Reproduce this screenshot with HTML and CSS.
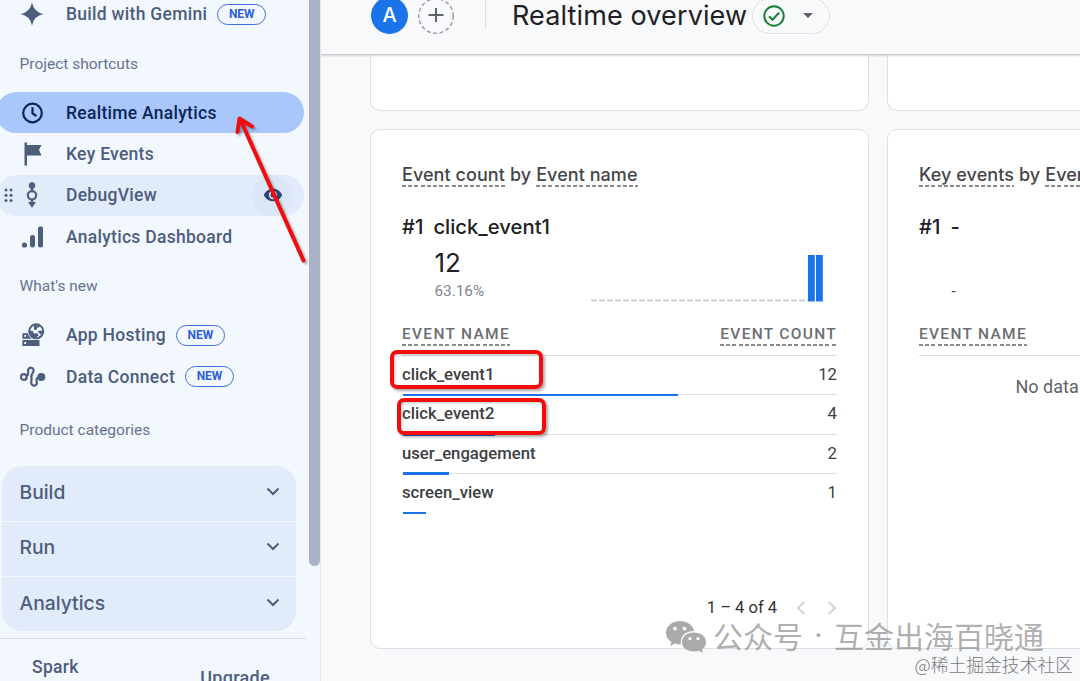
FILE: index.html
```
<!DOCTYPE html>
<html lang="en">
<head>
    <meta charset="UTF-8">
    <meta name="viewport" content="width=device-width, initial-scale=1.0">
    <title>Realtime overview</title>
    <link rel="stylesheet" href="styles.css">
</head>
<body>
    <aside class="sidebar">
        <nav class="nav">
            <a class="nav-item gemini">
                <svg class="icon" viewBox="0 0 24 24"><path d="M12 0.500Q13.800 10.200 23.500 12Q13.800 13.800 12 23.500Q10.200 13.800 0.500 12Q10.200 10.200 12 0.500Z"/></svg>
                <span>Build with Gemini</span>
                <span class="badge">NEW</span>
            </a>
            <div class="nav-title shortcuts">Project shortcuts</div>
            <a class="nav-item active">
                <svg class="icon" viewBox="0 0 24 24"><circle class="line" cx="12.500" cy="12" r="9.300"/><path class="line" d="M12.500 6.300V12.400L16.500 15"/></svg>
                <span>Realtime Analytics</span>
            </a>
            <a class="nav-item">
                <svg class="icon" viewBox="0 0 24 24"><path d="M4.500 0.500H7V3H21.500L19 8L21.500 13.500H7V23.500H4.500Z"/></svg>
                <span>Key Events</span>
            </a>
            <a class="nav-item hovered">
                <svg class="drag" viewBox="0 0 9 15"><circle cx="2" cy="2" r="1.500"/><circle cx="7" cy="2" r="1.500"/><circle cx="2" cy="7.300" r="1.500"/><circle cx="7" cy="7.300" r="1.500"/><circle cx="2" cy="12.600" r="1.500"/><circle cx="7" cy="12.600" r="1.500"/></svg>
                <svg class="icon tall" viewBox="0 0 24 26"><circle cx="12" cy="3.500" r="3.200"/><path d="M10.800 4H13.200V9H10.800ZM10.800 17H13.200V20H16L12 25.800L8 20H10.800Z"/><circle class="line" cx="12" cy="13.300" r="4.200"/></svg>
                <span>DebugView</span>
                <span class="eye"><svg viewBox="0 0 24 24"><path d="M12 4.500C7 4.500 2.700 7.600 1 12c1.700 4.400 6 7.500 11 7.500s9.300-3.100 11-7.500C21.300 7.600 17 4.500 12 4.500zM12 17a5 5 0 1 1 0-10 5 5 0 0 1 0 10zm0-8a3 3 0 1 0 0 6 3 3 0 0 0 0-6z"/></svg></span>
            </a>
            <a class="nav-item">
                <svg class="icon" viewBox="0 0 24 24"><circle cx="4.500" cy="20" r="2.600"/><rect x="10" y="10" width="5" height="12.500" rx="2.500"/><rect x="18" y="1.500" width="5" height="21" rx="2"/></svg>
                <span>Analytics Dashboard</span>
            </a>
            <div class="nav-title whats-new">What's new</div>
            <a class="nav-item">
                <svg class="icon wide" viewBox="0 0 26 26"><path fill-rule="evenodd" d="M1.500 18.500H20V25H1.500ZM3.500 20.700V22.700H5.500V20.700Z"/><path fill-rule="evenodd" d="M1.500 11H7.500Q8 15 11.500 17H1.500ZM3.500 13V15H5.500V13Z"/><circle class="line" cx="16.500" cy="9" r="7.600"/><path d="M9 8L13 9L14 11.500L18 11L19 13.500L15 16.500Q10 15 9 8ZM14 2.500L20 2.500L20 4.500L17.500 5L17 7.500L14 7ZM20 8L24 9L21 13L20 11L18 9.500Z"/></svg>
                <span>App Hosting</span>
                <span class="badge">NEW</span>
            </a>
            <a class="nav-item">
                <svg class="icon wide" viewBox="0 0 26 24"><circle class="line" cx="3.800" cy="12" r="2.900"/><path class="line" d="M6.400 10.800C10.500 9 6.500 6.500 8.500 4C10.500 1.500 14 3 13.500 6C13 8.500 10.500 9.500 11.500 13C12 15 10.500 17 11.500 19C13 22 17.500 20.500 16.800 17C16.500 15 15.500 13.500 18.500 12.500"/><circle cx="21.300" cy="12" r="4"/></svg>
                <span>Data Connect</span>
                <span class="badge">NEW</span>
            </a>
            <div class="nav-title products">Product categories</div>
        </nav>

        <div class="categories">
            <div class="category"><span>Build</span><svg class="chevron" viewBox="0 0 14 9"><path d="M1.500 1.500L7 7L12.500 1.500"/></svg></div>
            <div class="category"><span>Run</span><svg class="chevron" viewBox="0 0 14 9"><path d="M1.500 1.500L7 7L12.500 1.500"/></svg></div>
            <div class="category"><span>Analytics</span><svg class="chevron" viewBox="0 0 14 9"><path d="M1.500 1.500L7 7L12.500 1.500"/></svg></div>
        </div>

        <div class="plan">
            <span>Spark</span>
            <span class="upgrade">Upgrade</span>
        </div>
        <div class="scrollbar"></div>
    </aside>

    <main class="main">
        <header class="header">
            <span class="avatar">A</span>
            <svg class="add" viewBox="0 0 38 38"><circle cx="19" cy="19" r="17.300"/><path d="M19 11V25M11.500 18H26.500"/></svg>
            <span class="divider"></span>
            <h1>Realtime overview</h1>
            <div class="status">
                <svg class="check" viewBox="0 0 22 22"><circle cx="11" cy="11" r="9.700"/><path d="M6 11.300L9.500 14.800L16 7.800"/></svg>
                <svg class="caret" viewBox="0 0 10 5"><path d="M0 0H10L5 5Z"/></svg>
            </div>
        </header>

        <div class="cards">
            <section class="card top-card"></section>
            <section class="card top-card"></section>

            <section class="card">
                <h2><span class="dashed">Event count</span> by <span class="dashed">Event name</span></h2>
                <div class="rank"><span>#1</span><span>click_event1</span></div>
                <div class="summary">
                    <div>
                        <div class="big">12</div>
                        <div class="percent">63.16%</div>
                    </div>
                    <svg class="chart" viewBox="0 0 232 48"><path d="M0 46.500H217"/><rect x="217" y="1" width="6.800" height="46.500"/><rect x="225" y="1" width="6.800" height="46.500"/></svg>
                </div>
                <div class="table-head"><span class="dashed">EVENT NAME</span><span class="dashed">EVENT COUNT</span></div>
                <div class="row"><b>click_event1</b><span>12</span><i class="bar" style="width: 275px"></i></div>
                <div class="row"><b>click_event2</b><span>4</span><i class="bar" style="width: 92px"></i></div>
                <div class="row"><b>user_engagement</b><span>2</span><i class="bar" style="width: 46px"></i></div>
                <div class="row last"><b>screen_view</b><span>1</span><i class="bar" style="width: 23px"></i></div>
                <div class="pager">
                    <span>1 – 4 of 4</span>
                    <svg viewBox="0 0 10 14"><path d="M8.500 1L2 7L8.500 13"/></svg>
                    <svg viewBox="0 0 10 14"><path d="M1.500 1L8 7L1.500 13"/></svg>
                </div>
            </section>

            <section class="card">
                <h2><span class="dashed">Key events</span> by <span class="dashed">Event name</span></h2>
                <div class="rank"><span>#1</span><span>-</span></div>
                <div class="summary">
                    <div>
                        <div class="big"></div>
                        <div class="percent empty">-</div>
                    </div>
                </div>
                <div class="table-head"><span class="dashed">EVENT NAME</span></div>
                <div class="no-data">No data available</div>
            </section>
        </div>
    </main>

    <!-- Annotations -->
    <div class="mark mark-one"></div>
    <div class="mark mark-two"></div>
    <svg class="arrow" viewBox="0 0 90 160"><path d="M78.500 145.500L16 6M12.500 17L14.500 3.500L27 11.500"/></svg>

    <div class="watermark">
        <svg viewBox="0 0 42 34"><path fill-rule="evenodd" d="M15 1C7 1 1 6 1 13C1 17 3 20 6.500 22L5 26L10 23.500Q13 24.500 16 24.500C14.500 17 20 11 29 11C28 5 22 1 15 1ZM10 6.700A1.900 1.900 0 1 0 10 10.500A1.900 1.900 0 1 0 10 6.700ZM19.500 6.700A1.900 1.900 0 1 0 19.500 10.500A1.900 1.900 0 1 0 19.500 6.700Z"/><path fill-rule="evenodd" d="M29 12.500C22 12.500 17 16.500 17 22C17 28 22 31.500 29 31.500Q31.500 31.500 34 30.800L38 33L37 29.500C39.700 27.700 41 25 41 22C41 16.500 36 12.500 29 12.500ZM25 17A1.600 1.600 0 1 0 25 20.200A1.600 1.600 0 1 0 25 17ZM33 17A1.600 1.600 0 1 0 33 20.200A1.600 1.600 0 1 0 33 17Z"/></svg>
        <span>公众号</span><span class="dot">·</span><span>互金出海百晓通</span>
    </div>
    <div class="credit">@稀土掘金技术社区</div>
</body>
</html>
```
FILE: styles.css
```
/* General Styles */
* {
    box-sizing: border-box;
}

body {
    margin: 0;
    width: 1080px;
    height: 681px;
    display: flex;
    position: relative;
    overflow: hidden;
    font-family: Roboto, Arial, sans-serif;
    background: #f8f9fb;
}

svg {
    display: block;
    flex: none;
}

/* Sidebar */
.sidebar {
    position: relative;
    flex: none;
    width: 321px;
    height: 681px;
    background: #f3f7fe;
    border-right: 1px solid #e3e6ec;
    color: #4c5d7d;
    overflow: hidden;
}

.nav-item {
    display: flex;
    align-items: center;
    width: 304px;
    height: 41.4px;
    padding-left: 20px;
    font-size: 17.5px;
    font-weight: 500;
    letter-spacing: 0.28px;
    white-space: nowrap;
}

.gemini {
    margin-top: -6.5px;
}

.icon {
    width: 24px;
    height: 24px;
    margin-right: 22px;
    fill: #4c5d7d;
}

.icon .line {
    fill: none;
    stroke: #4c5d7d;
    stroke-width: 2.2;
}

.icon.tall {
    height: 26px;
}

.icon.wide {
    width: 26px;
    margin-right: 20px;
}

.badge {
    width: 49px;
    height: 21px;
    margin-left: 10px;
    border: 1.5px solid #3f6fd8;
    border-radius: 11px;
    color: #2b5fd9;
    font-size: 12px;
    font-weight: 700;
    letter-spacing: 0;
    line-height: 19px;
    text-align: center;
}

.nav-title {
    height: 20px;
    padding-left: 19.5px;
    font-size: 15.5px;
    line-height: 20px;
    color: #66738f;
}

.shortcuts {
    margin: 19px 0 18px;
}

.whats-new {
    margin: 18.6px 0 18.4px;
}

.products {
    margin: 22.6px 0 26.5px;
}

.active {
    width: 308px;
    margin-left: -4px;
    padding-left: 24px;
    border-radius: 21px;
    background: #a9c7fb;
    color: #0b2559;
}

.active .icon .line {
    stroke: #0b2559;
}

.hovered {
    width: 308px;
    margin-left: -4px;
    padding-left: 8px;
    border-radius: 21px;
    background: #e2ebfa;
}

.drag {
    width: 9px;
    height: 15px;
    margin-right: 7px;
    fill: #4c5d7d;
}

.eye {
    display: flex;
    align-items: center;
    justify-content: center;
    width: 41px;
    height: 41px;
    margin-left: auto;
    margin-right: 11px;
    border-radius: 50%;
    background: #dde6f6;
}

.eye svg {
    width: 20px;
    height: 20px;
    fill: #2c4a78;
}

.categories {
    margin-left: 2px;
    width: 294px;
    height: 165px;
    border-radius: 20px;
    background: #e2ebfa;
    overflow: hidden;
}

.category {
    display: flex;
    align-items: center;
    justify-content: space-between;
    height: 55.4px;
    padding: 0 16px 4px 17.5px;
    border-bottom: 1.5px solid #f3f7fe;
    font-family: Inter, sans-serif;
    font-size: 19.3px;
    font-weight: 500;
}

.category:last-child {
    border-bottom: none;
}

.chevron {
    width: 14px;
    height: 9px;
    fill: none;
    stroke: #4c5d7d;
    stroke-width: 2;
}

.plan {
    display: flex;
    width: 306px;
    margin-top: 7px;
    padding: 18px 0 0 32px;
    border-top: 1px solid #d5dbe6;
    font-size: 17.5px;
    font-weight: 500;
    letter-spacing: 0.3px;
    line-height: 20px;
}

.upgrade {
    margin: 11px 0 0 auto;
    padding-right: 36px;
    font-size: 18px;
}

.scrollbar {
    position: absolute;
    top: 0;
    right: 0;
    width: 11px;
    height: 566px;
    border-radius: 0 0 6px 6px;
    background: #a8b3ca;
}

/* Main area */
.main {
    flex: 1;
    min-width: 0;
    overflow: hidden;
}

.header {
    display: flex;
    align-items: center;
    height: 55px;
    padding: 0 0 23px 50px;
    border-bottom: 1px solid #c9cbce;
    box-shadow: 0 1px 2px rgba(0, 0, 0, 0.15);
    position: relative;
}

.avatar {
    width: 37px;
    height: 37px;
    border-radius: 50%;
    background: #1a73e8;
    color: white;
    font-family: Inter, sans-serif;
    font-size: 20px;
    font-weight: 500;
    line-height: 37px;
    text-align: center;
}

.add {
    width: 38px;
    height: 38px;
    margin-left: 9px;
    fill: none;
    stroke: #5f6368;
    stroke-width: 2;
}

.add circle {
    stroke: #9aa0a6;
    stroke-width: 1.5;
    stroke-dasharray: 4 2.5;
}

.divider {
    width: 1px;
    height: 34px;
    margin: -8px 26px 0 30px;
    background: #dadce0;
}

h1 {
    margin: 0;
    width: 240px;
    font-family: Inter, sans-serif;
    font-size: 27px;
    font-weight: 400;
    letter-spacing: 0.12px;
    white-space: nowrap;
    color: #202124;
}

.status {
    display: flex;
    align-items: center;
    width: 78px;
    height: 36px;
    padding-left: 10px;
    border: 1.5px solid #dfe1e6;
    border-radius: 18px;
}

.check {
    width: 22px;
    height: 22px;
    fill: none;
    stroke: #188038;
    stroke-width: 2;
}

.caret {
    width: 10px;
    height: 5px;
    margin-left: 18px;
    fill: #5f6368;
}

.cards {
    display: grid;
    grid-template-columns: 499px 499px;
    grid-template-rows: 56px 520px;
    gap: 18px;
    padding-left: 49px;
}

.card {
    padding: 33px 31px 0 31px;
    background: white;
    border: 1.5px solid #dcdfe4;
    border-radius: 10px;
    white-space: nowrap;
}

.card.top-card {
    padding: 0;
    border-top: none;
    border-radius: 0 0 10px 10px;
}

.dashed {
    background: repeating-linear-gradient(to right, #8a8a8a 0 4px, transparent 4px 6.2px) left bottom / 100% 2px no-repeat;
}

h2 {
    display: flex;
    gap: 5px;
    margin: 0;
    height: 24px;
    font-family: Inter, sans-serif;
    font-size: 18px;
    font-weight: 500;
    letter-spacing: 0.06px;
    line-height: 24px;
    color: #444649;
}

.rank {
    display: flex;
    gap: 10px;
    margin-top: 28px;
    font-family: Inter, sans-serif;
    font-size: 20.3px;
    font-weight: 500;
    line-height: 24px;
    color: #202124;
}

.summary {
    display: flex;
    justify-content: space-between;
    height: 64px;
    padding: 0 14px 0 32.5px;
}

.big {
    height: 26px;
    margin-top: 11px;
    font-family: Inter, sans-serif;
    font-size: 26px;
    line-height: 26px;
    color: #202124;
}

.percent {
    margin-top: 5px;
    font-size: 15.3px;
    line-height: 20px;
    color: #80868b;
}

.percent.empty {
    color: #3c4043;
}

.chart {
    width: 232px;
    height: 48px;
    margin-top: 15px;
    fill: #1a73e8;
}

.chart path {
    stroke: #c4c6c9;
    stroke-width: 1.5;
    stroke-dasharray: 6 2;
}

.table-head {
    display: flex;
    justify-content: space-between;
    align-items: flex-start;
    height: 53px;
    padding-top: 19px;
    border-bottom: 1.5px solid #dcdee1;
    font-size: 15.5px;
    font-weight: 500;
    letter-spacing: 1.3px;
    line-height: 25px;
    color: #6b6e72;
}

.table-head .dashed {
    height: 24px;
}

.row {
    display: flex;
    justify-content: space-between;
    position: relative;
    height: 39.3px;
    border-bottom: 1.5px solid #dcdee1;
    font-size: 16.7px;
    line-height: 37.6px;
    color: #3c4043;
}

.row.last {
    border-bottom-color: transparent;
}

.row b {
    font-weight: 500;
}

.bar {
    position: absolute;
    left: 1px;
    bottom: -2px;
    height: 2.5px;
    background: #1a73e8;
}

.pager {
    display: flex;
    align-items: center;
    justify-content: flex-end;
    gap: 21px;
    margin-top: 84.5px;
    font-size: 16.5px;
    line-height: 20px;
    color: #303236;
}

.pager span {
    margin-right: -2px;
}

.pager svg {
    width: 10px;
    height: 14px;
    fill: none;
    stroke: #d0d2d5;
    stroke-width: 2;
}

.no-data {
    margin: 19.5px 0 0 96.5px;
    font-size: 18px;
    line-height: 22px;
    color: #5f6368;
}

/* Annotations */
.mark {
    position: absolute;
    border: 4px solid #f20d0d;
    border-radius: 7px;
    box-shadow: 2px 2px 3px rgba(0, 0, 0, 0.35), inset 1px 1px 3px rgba(0, 0, 0, 0.25);
}

.mark-one {
    left: 390px;
    top: 350px;
    width: 153px;
    height: 39px;
}

.mark-two {
    left: 397px;
    top: 398px;
    width: 149px;
    height: 37px;
}

.arrow {
    position: absolute;
    left: 225px;
    top: 115px;
    width: 90px;
    height: 160px;
    fill: none;
    stroke: #f20d0d;
    stroke-width: 4;
    stroke-linecap: round;
    stroke-linejoin: round;
    filter: drop-shadow(2px 2px 1px rgba(0, 0, 0, 0.3));
}

.watermark {
    position: absolute;
    left: 665px;
    top: 617px;
    display: flex;
    align-items: center;
    height: 36px;
    font-family: "Noto Sans CJK SC", sans-serif;
    font-size: 30px;
    font-weight: 400;
    line-height: 36px;
    color: rgba(130, 130, 130, 0.65);
    white-space: nowrap;
}

.watermark svg {
    width: 42px;
    height: 34px;
    margin: 4px 6px 0 0;
    fill: #aaaaaa;
}

.watermark .dot {
    width: 31px;
    font-family: Roboto, sans-serif;
    font-weight: 500;
    text-align: center;
}

.credit {
    position: absolute;
    right: 7px;
    top: 654px;
    font-family: "Noto Sans CJK SC", sans-serif;
    font-size: 17.8px;
    font-weight: 300;
    line-height: 20px;
    color: #77797c;
    white-space: nowrap;
}
```
